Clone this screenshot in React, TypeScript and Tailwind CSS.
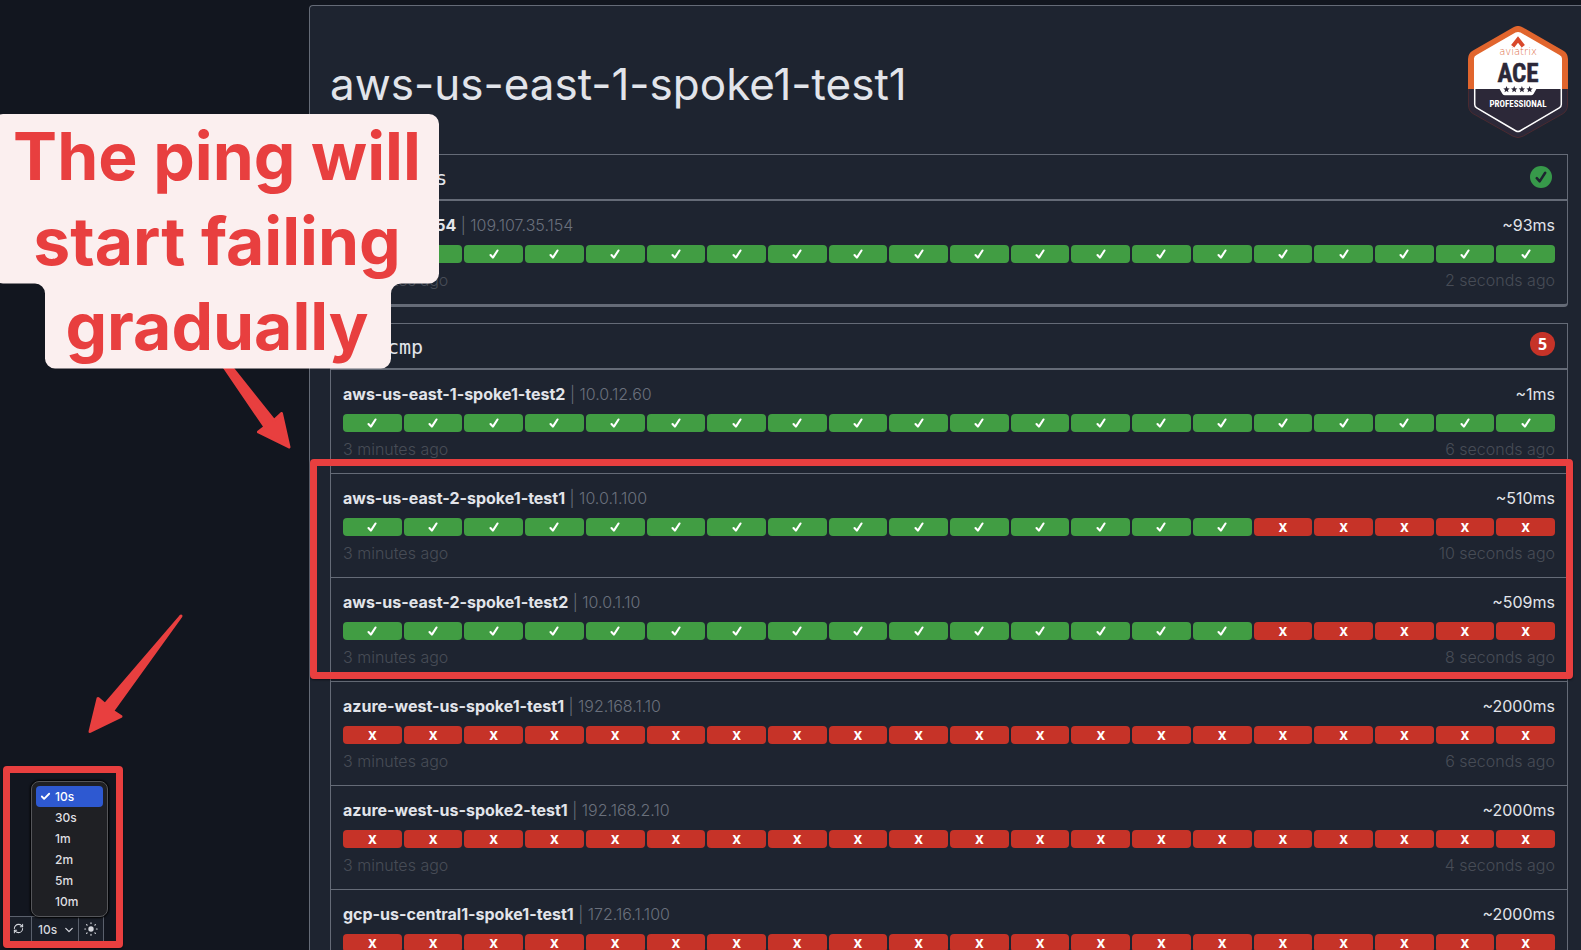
import React from "react";
import { Check, RefreshCw } from "lucide-react";

type Target = { name: string; ip: string; latency: string; ok: number; last: string };
type Group = { label: string; failing: number; targets: Target[] };

const SAMPLES = 20;

const groups: Group[] = [
  {
    label: "egress",
    failing: 0,
    targets: [
      { name: "109.107.35.154", ip: "109.107.35.154", latency: "~93ms", ok: 20, last: "2 seconds ago" },
    ],
  },
  {
    label: "icmp",
    failing: 5,
    targets: [
      { name: "aws-us-east-1-spoke1-test2", ip: "10.0.12.60", latency: "~1ms", ok: 20, last: "6 seconds ago" },
      { name: "aws-us-east-2-spoke1-test1", ip: "10.0.1.100", latency: "~510ms", ok: 15, last: "10 seconds ago" },
      { name: "aws-us-east-2-spoke1-test2", ip: "10.0.1.10", latency: "~509ms", ok: 15, last: "8 seconds ago" },
      { name: "azure-west-us-spoke1-test1", ip: "192.168.1.10", latency: "~2000ms", ok: 0, last: "6 seconds ago" },
      { name: "azure-west-us-spoke2-test1", ip: "192.168.2.10", latency: "~2000ms", ok: 0, last: "4 seconds ago" },
      { name: "gcp-us-central1-spoke1-test1", ip: "172.16.1.100", latency: "~2000ms", ok: 0, last: "6 seconds ago" },
    ],
  },
];

const intervals = ["10s", "30s", "1m", "2m", "5m", "10m"];

function Tick({ className }: { className: string }) {
  return (
    <svg viewBox="0 0 10 10" className={className} fill="none" stroke="currentColor" strokeWidth="2.1" strokeLinecap="round" strokeLinejoin="round" aria-hidden="true">
      <path d="M1.500 6 3.900 8.600 8.500 1.500" />
    </svg>
  );
}

function AceBadge() {
  return (
    <svg viewBox="0 0 100 112" className="h-28 w-[100px]" role="img" aria-label="Aviatrix ACE Professional">
      <defs>
        <clipPath id="top"><rect width="100" height="63" /></clipPath>
        <clipPath id="bottom"><rect y="63" width="100" height="49" /></clipPath>
      </defs>
      <path clipPath="url(#top)" fill="#e1652d" d="M45 1.4a10 10 0 0 1 10 0L95 24.4a10 10 0 0 1 5 8.6V79a10 10 0 0 1-5 8.600L55 110.600a10 10 0 0 1-10 0L5 87.600A10 10 0 0 1 0 79V33a10 10 0 0 1 5-8.600Z" />
      <path clipPath="url(#bottom)" fill="#2c2838" stroke="#4a2a30" strokeWidth="1" d="M45 1.4a10 10 0 0 1 10 0L95 24.4a10 10 0 0 1 4.500 8.600V79a10 10 0 0 1-4.500 8.600L55 110.200a10 10 0 0 1-10 0L5 87.600A10 10 0 0 1 .5 79V33a10 10 0 0 1 4.500-8.600Z" />
      <path clipPath="url(#top)" fill="#fff" d="M47.500 6.600a5 5 0 0 1 5 0L91.500 29a4 4 0 0 1 2.500 4V80H6V33a4 4 0 0 1 2.500-4Z" />
      <path clipPath="url(#bottom)" fill="none" stroke="#fff" strokeWidth="1.500" d="M6.700 60V78.500a4 4 0 0 0 2 3.400L48 105a4 4 0 0 0 4 0L91.300 81.900a4 4 0 0 0 2-3.400V60" />
      <path fill="#fff" d="M31 62h38l-3.500 6a3 3 0 0 1-2.500 1.300H37a3 3 0 0 1-2.500-1.300Z" />
      <path fill="none" stroke="#d9482b" strokeWidth="4" d="M44.700 20.300 50 13.500l5.300 6.800" />
      <text x="50" y="29" textAnchor="middle" className="fill-[#dd6a45] font-['DejaVu_Sans',sans-serif] text-[10px] font-extralight">aviatrix</text>
      <text x="50" y="56" textAnchor="middle" className="fill-[#2c2838] stroke-[#2c2838] font-['Liberation_Sans_Narrow','Roboto_Condensed','Roboto',sans-serif] text-[25px] font-bold" strokeWidth="0.5">ACE</text>
      {[38.5, 46.2, 53.9, 61.6].map((x) => (
        <path key={x} fill="#2c2838" transform={`translate(${x} 63.3)`} d="M0-3.200.9-1 3.200-.9 1.400.6 2 2.900 0 1.600-2 2.900-1.400.6-3.200-.9-.9-1Z" />
      ))}
      <text x="50" y="81" textAnchor="middle" className="fill-white font-['Liberation_Sans_Narrow','Roboto_Condensed','Roboto',sans-serif] text-[9px] font-bold">PROFESSIONAL</text>
    </svg>
  );
}

function TargetRow({ target }: { target: Target }) {
  return (
    <li className="border-t border-[#656b77] p-3 first:border-t-0">
      <div className="flex justify-between leading-6">
        <h3 className="font-light text-[#6a707c]">
          <span className="font-bold text-[#e2e4ea]">{target.name}</span> | {target.ip}
        </h3>
        <span className="text-[#e2e4ea]">{target.latency}</span>
      </div>
      <ol className="mt-2 flex gap-0.5" aria-label={`Samples for ${target.name}`}>
        {Array.from({ length: SAMPLES }, (_, i) =>
          i < target.ok ? (
            <li key={i} className="flex h-[18px] flex-1 items-center justify-center rounded bg-[#419d43] text-white">
              <Tick className="size-[10px]" />
            </li>
          ) : (
            <li key={i} className="flex h-[18px] flex-1 items-center justify-center rounded bg-[#c63328] pt-px font-['Noto_Sans',sans-serif] text-xs font-extrabold leading-none text-white">
              X
            </li>
          ),
        )}
      </ol>
      <div className="mt-[5px] flex justify-between leading-6 font-light text-[#474c56]">
        <span>3 minutes ago</span>
        <span>{target.last}</span>
      </div>
    </li>
  );
}

function GroupCard({ group }: { group: Group }) {
  return (
    <section className="rounded-b-sm border border-b-[3px] border-[#656b77]">
      <header className="flex h-[46px] items-center justify-between border-b-2 border-[#656b77] px-3">
        <h2 className="pt-0.5 pl-8 font-['DejaVu_Sans_Mono',monospace] text-xl leading-6 text-[#e2e4ea]">{group.label}</h2>
        {group.failing > 0 ? (
          <span className="mb-1 flex h-6 w-[25px] items-center justify-center rounded-full bg-[#c63328] font-['Noto_Sans',sans-serif] text-base font-bold leading-none text-white">
            {group.failing}
          </span>
        ) : (
          <span className="mr-[3px] flex size-[22px] items-center justify-center rounded-full bg-[#37994a] text-[#1e2430]">
            <Tick className="size-3" />
          </span>
        )}
      </header>
      <ul>
        {group.targets.map((t) => (
          <TargetRow key={t.name} target={t} />
        ))}
      </ul>
    </section>
  );
}

function Toolbar() {
  return (
    <div className="relative ml-1.5 flex h-7 w-[98px] border-t border-r border-[#5a606c] bg-[#1a1f29] text-[#d5d7dd]">
      <button aria-label="Refresh" className="flex w-[26px] items-center justify-center border-r border-[#5a606c] pb-1">
        <RefreshCw className="size-[11px]" strokeWidth={2.2} aria-hidden="true" />
      </button>
      <div className="relative flex w-[47px] border-r border-[#5a606c]">
        <select aria-label="Refresh interval" defaultValue="10s" className="mb-0.5 w-full appearance-none bg-transparent pl-1.5 text-xs font-medium outline-none">
          {intervals.map((v) => (
            <option key={v}>{v}</option>
          ))}
        </select>
        <svg viewBox="0 0 10 10" className="pointer-events-none absolute top-[9px] right-[5px] size-2" fill="none" stroke="currentColor" strokeWidth="1.600" strokeLinecap="round" strokeLinejoin="round" aria-hidden="true">
          <path d="M1 3l4 4 4-4" />
        </svg>
      </div>
      <button aria-label="Light theme" className="flex flex-1 items-center justify-center pb-1">
        <svg viewBox="0 0 14 14" className="size-3.5" aria-hidden="true">
          <circle cx="7" cy="7" r="2.700" fill="currentColor" />
          <path stroke="currentColor" strokeWidth="1.200" strokeLinecap="round" d="M7 .8v.8M7 12.400v.8M.8 7h.8M12.400 7h.8M2.600 2.600l.5.5M10.900 10.900l.5.5M2.600 11.400l.5-.5M10.900 3.100l.5-.5" />
        </svg>
      </button>
      <ul role="listbox" aria-label="Refresh interval" className="absolute bottom-[27px] left-[25px] w-[77px] rounded-lg border border-[#55565a] bg-[#1f2024] p-1 text-[#dfdfe1] shadow-[0_0_2px_1px_#000]">
        {intervals.map((v, i) => (
          <li
            key={v}
            role="option"
            aria-selected={i === 0}
            className="relative rounded pl-[19px] text-xs leading-[21px] font-medium aria-selected:bg-[#2e59d1] aria-selected:text-white"
          >
            {i === 0 && <Check className="absolute top-[5px] left-1 size-[11px]" strokeWidth={4} aria-hidden="true" />}
            {v}
          </li>
        ))}
      </ul>
    </div>
  );
}

function Annotations() {
  return (
    <div className="pointer-events-none">
      <svg className="absolute top-0 left-0 h-[760px] w-[320px]" viewBox="0 0 320 760" fill="#e83f3f" stroke="#e83f3f" strokeWidth="3" strokeLinejoin="round" aria-hidden="true">
        <path d="M222 364 265 427 258.500 432 289 447 281.500 413.500 274 420.500 229 364Z" />
        <path d="M181 616 105 704.500 98 698.500 90 731.500 121 716.500 112.500 711Z" />
      </svg>
      <svg className="absolute top-[114px] left-0 h-[255px] w-[440px]" viewBox="0 0 440 255" fill="#fbefef" aria-hidden="true">
        <path d="M-7 10A10 10 0 0 1 3 0H429A10 10 0 0 1 439 10V159.500A10 10 0 0 1 429 169.500H401A10 10 0 0 0 391 179.500V244.500A10 10 0 0 1 381 254.500H55A10 10 0 0 1 45 244.500V179.500A10 10 0 0 0 35 169.500H3A10 10 0 0 1-7 159.500Z" />
      </svg>
      <p className="absolute top-[114px] left-0 w-[434px] text-center text-[66px] font-bold leading-[85px] whitespace-nowrap text-[#e83f3f]">
        The ping will
        <br />
        start failing
        <br />
        gradually
      </p>
      <div className="absolute top-[459px] right-2 left-[310px] h-[220px] rounded border-[7px] border-[#e83f3f] shadow-[0_1px_2px_#0008]" />
      <div className="absolute top-[766px] left-[3px] h-[182px] w-[120px] rounded border-[7px] border-[#e83f3f] shadow-[0_1px_2px_#0008]" />
    </div>
  );
}

export default function App() {
  return (
    <div className="relative flex h-screen overflow-hidden bg-[#12161f] font-['Inter',sans-serif] text-base">
      <aside className="flex w-[309px] shrink-0 flex-col justify-end pb-1.5">
        <Toolbar />
      </aside>
      <main className="mt-[5px] h-full min-w-0 flex-1 rounded-tl border-t border-l border-[#656b77] bg-[#1e2430] pt-5 pr-[13px] pl-5">
        <div className="flex h-32 items-start justify-between">
          <h1 className="mt-[26px] text-[44px] leading-[64px] text-[#e2e4ea]">aws-us-east-1-spoke1-test1</h1>
          <AceBadge />
        </div>
        <div className="flex flex-col gap-4">
          {groups.map((g) => (
            <GroupCard key={g.label} group={g} />
          ))}
        </div>
      </main>
      <Annotations />
    </div>
  );
}
